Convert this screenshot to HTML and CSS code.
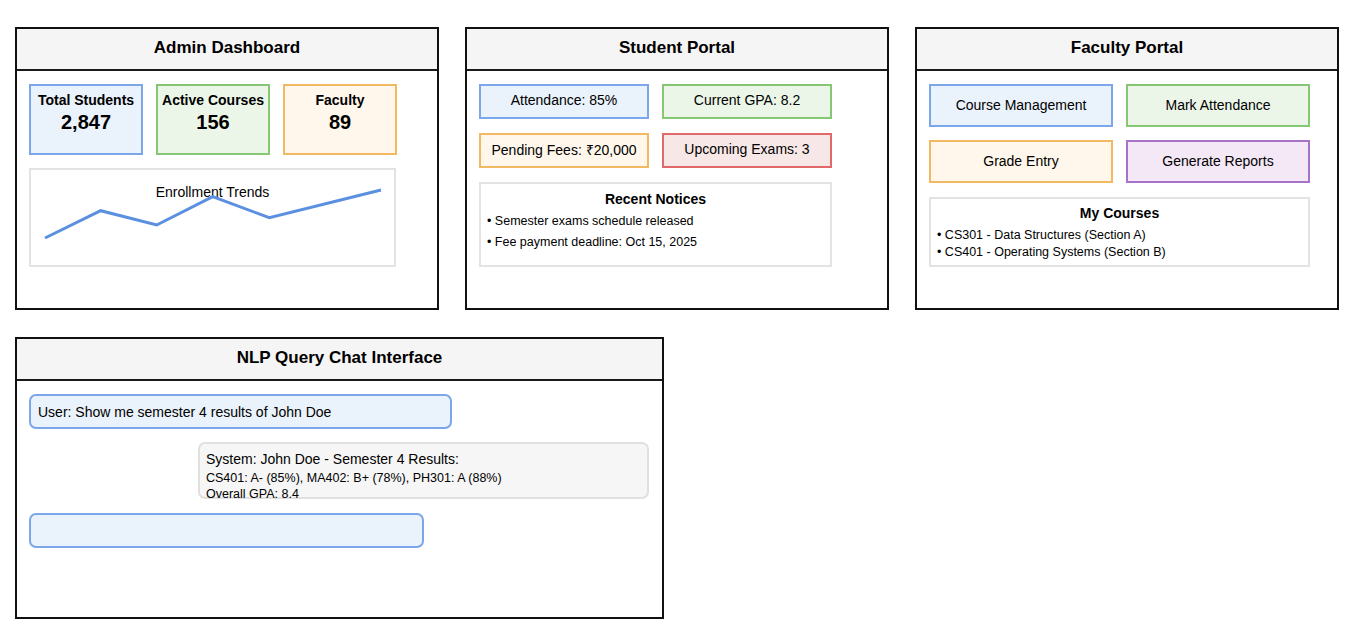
FILE: index.html
```html
<!DOCTYPE html>
<html lang="en">
<head>
<meta charset="utf-8">
<title>College Portal Mockup</title>
<link rel="stylesheet" href="styles.css">
</head>
<body>
<div class="page">
  <div class="row">
    <section class="panel">
      <header class="panel-head">Admin Dashboard</header>
      <div class="panel-body">
        <div class="stats">
          <div class="stat blue"><div class="stat-label">Total Students</div><div class="stat-value">2,847</div></div>
          <div class="stat green"><div class="stat-label">Active Courses</div><div class="stat-value">156</div></div>
          <div class="stat orange"><div class="stat-label">Faculty</div><div class="stat-value">89</div></div>
        </div>
        <div class="chart">
          <div class="chart-title">Enrollment Trends</div>
          <svg class="chart-line" width="363" height="95" viewBox="0 0 363 95">
            <polyline points="14,68 69.7,40.7 125.7,55 181.7,26.7 238.3,47.7 350,20" fill="none" stroke="#5b8fe0" stroke-width="3" stroke-linejoin="miter"/>
          </svg>
        </div>
      </div>
    </section>

    <section class="panel">
      <header class="panel-head">Student Portal</header>
      <div class="panel-body">
        <div class="tiles student-tiles">
          <div class="tile blue">Attendance: 85%</div>
          <div class="tile green">Current GPA: 8.2</div>
          <div class="tile orange">Pending Fees: ₹20,000</div>
          <div class="tile red">Upcoming Exams: 3</div>
        </div>
        <div class="list-box notices">
          <div class="list-title">Recent Notices</div>
          <div class="list-item">• Semester exams schedule released</div>
          <div class="list-item">• Fee payment deadline: Oct 15, 2025</div>
        </div>
      </div>
    </section>

    <section class="panel">
      <header class="panel-head">Faculty Portal</header>
      <div class="panel-body">
        <div class="tiles faculty-tiles">
          <div class="tile blue">Course Management</div>
          <div class="tile green">Mark Attendance</div>
          <div class="tile orange">Grade Entry</div>
          <div class="tile purple">Generate Reports</div>
        </div>
        <div class="list-box courses">
          <div class="list-title">My Courses</div>
          <div class="list-item">• CS301 - Data Structures (Section A)</div>
          <div class="list-item">• CS401 - Operating Systems (Section B)</div>
        </div>
      </div>
    </section>
  </div>

  <div class="row">
    <section class="panel chat-panel">
      <header class="panel-head">NLP Query Chat Interface</header>
      <div class="panel-body chat-body">
        <div class="bubble user">User: Show me semester 4 results of John Doe</div>
        <div class="bubble system">
          <div class="sys-head">System: John Doe - Semester 4 Results:</div>
          <div class="sys-line">CS401: A- (85%), MA402: B+ (78%), PH301: A (88%)</div>
          <div class="sys-line">Overall GPA: 8.4</div>
        </div>
        <div class="bubble input"></div>
      </div>
    </section>
  </div>
</div>
</body>
</html>
```

FILE: styles.css
```css
* { box-sizing: border-box; }

html, body {
  margin: 0;
  padding: 0;
  background: #ffffff;
}

body {
  font-family: "Liberation Sans", Arial, Helvetica, sans-serif;
  color: #000;
}

.page {
  display: flex;
  flex-direction: column;
  gap: 27px;
  padding: 27px 0 0 15px;
}

.row {
  display: flex;
  gap: 26px;
}

.panel {
  width: 424px;
  height: 283px;
  border: 2px solid #111;
  background: #fff;
  display: flex;
  flex-direction: column;
}

.chat-panel {
  width: 649px;
  height: 282px;
}

.panel-head {
  height: 42px;
  line-height: 38px;
  background: #f5f5f5;
  border-bottom: 2px solid #1a1a1a;
  text-align: center;
  font-weight: bold;
  font-size: 17px;
}

.panel-body {
  padding: 13px 0 0 12px;
}

/* Admin stats */
.stats {
  display: flex;
  gap: 13px;
}

.stat {
  width: 114px;
  height: 71px;
  padding-top: 5px;
  text-align: center;
  font-weight: bold;
}

.stat-label {
  font-size: 14px;
  line-height: 18px;
}

.stat-value {
  font-size: 20px;
  line-height: 26px;
}

.blue   { background: #eaf2fb; border: 2px solid #7ba7ea; }
.green  { background: #ebf6e8; border: 2px solid #86c775; }
.orange { background: #fff7eb; border: 2px solid #f2b862; }
.red    { background: #f7e7e7; border: 2px solid #e06a6a; }
.purple { background: #f4e7f6; border: 2px solid #a872c9; }

.chart {
  position: relative;
  margin-top: 13px;
  width: 367px;
  height: 99px;
  border: 2px solid #e3e3e3;
  padding-top: 13px;
  text-align: center;
  font-size: 14px;
  line-height: 18px;
}

.chart-line {
  position: absolute;
  left: 0;
  top: 0;
}

/* Tiles */
.tiles {
  display: grid;
  column-gap: 13px;
}

.student-tiles {
  grid-template-columns: 170px 170px;
  grid-auto-rows: 35px;
  row-gap: 14px;
}

.faculty-tiles {
  grid-template-columns: 184px 184px;
  grid-auto-rows: 43px;
  row-gap: 13px;
}

.tile {
  display: flex;
  align-items: center;
  justify-content: center;
  font-size: 14px;
  padding-bottom: 2px;
}

.student-tiles .tile {
  padding-bottom: 3px;
}

.list-box {
  margin-top: 14px;
  border: 2px solid #e3e3e3;
  background: #fff;
  padding-left: 6px;
}

.notices {
  width: 353px;
  height: 85px;
  padding-top: 6px;
}

.courses {
  width: 381px;
  height: 70px;
  padding-top: 5px;
}

.list-title {
  text-align: center;
  font-weight: bold;
  font-size: 14px;
  line-height: 18px;
  margin-left: -6px;
}

.notices .list-title { margin-bottom: 3px; }
.notices .list-item {
  font-size: 12.5px;
  line-height: 21px;
}

.courses .list-title { margin-bottom: 5px; }
.courses .list-item {
  font-size: 12.5px;
  line-height: 17px;
}

/* Chat */
.chat-body {
  display: flex;
  flex-direction: column;
  align-items: flex-start;
}

.bubble {
  border-radius: 7px;
}

.bubble.user {
  width: 423px;
  height: 35px;
  background: #eaf2fb;
  border: 2px solid #7ba7ea;
  display: flex;
  align-items: center;
  padding-left: 7px;
  font-size: 14px;
}

.bubble.system {
  margin-top: 13px;
  margin-left: 169px;
  width: 451px;
  height: 57px;
  background: #f6f6f6;
  border: 2px solid #e0e0e0;
  padding: 4px 0 0 6px;
}

.sys-head {
  font-size: 14px;
  line-height: 22px;
}

.sys-line {
  font-size: 12.5px;
  line-height: 16px;
}

.bubble.input {
  margin-top: 14px;
  width: 395px;
  height: 35px;
  background: #eaf2fb;
  border: 2px solid #7ba7ea;
}
```
